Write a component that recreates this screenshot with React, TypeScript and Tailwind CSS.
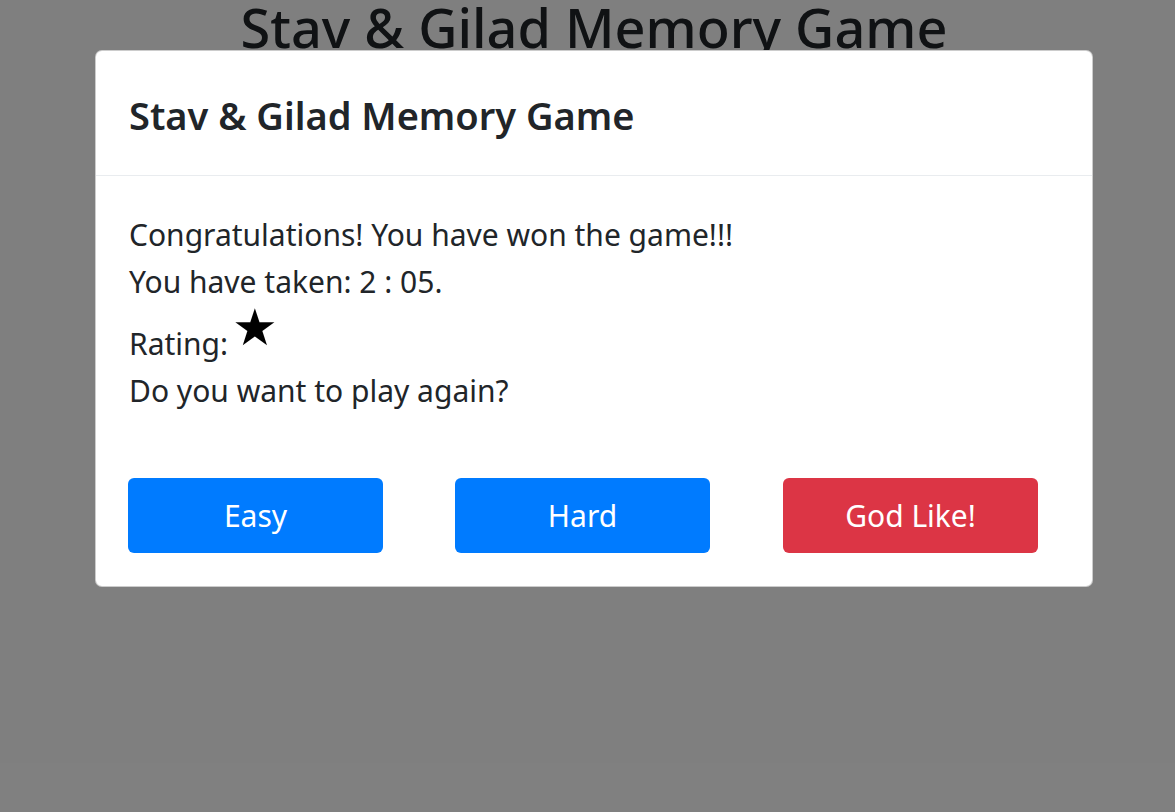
import React from "react";

export default function App() {
  return (
    <div
      className="relative h-[812px] w-full overflow-hidden bg-white text-[#212529]"
      style={{ fontFamily: '"Noto Sans", "Open Sans", sans-serif' }}
    >
      <h1 className="-mt-[5px] pl-[13px] text-center text-[54px] font-medium leading-[64px]">
        Stav &amp; Gilad Memory Game
      </h1>

      <div className="absolute inset-0 bg-black/50">
        <div className="ml-[95px] mt-[50px] w-[998px] rounded-[7px] border border-black/20 bg-white">
          <div className="flex h-[125px] items-center border-b border-[#e9ecef] px-[33px] pt-[4px]">
            <h5 className="text-[38px] font-semibold leading-none">Stav &amp; Gilad Memory Game</h5>
          </div>
          <div className="px-[33px] pt-[35px] text-[30px]">
            <div className="h-[47px] leading-[47px]">Congratulations! You have won the game!!!</div>
            <div className="h-[47px] leading-[47px]">You have taken: 2 : 05.</div>
            <div className="flex h-[62px] items-end leading-[47px]">
              <span>Rating:</span>
              <span
                className="mb-[14px] ml-[4px] text-[51px] leading-none text-black"
                style={{ fontFamily: '"DejaVu Sans", sans-serif' }}
              >
                ★
              </span>
            </div>
            <div className="h-[47px] leading-[47px]">Do you want to play again?</div>
          </div>
          <div className="flex gap-[72px] px-[32px] pb-[33px] pt-[64px]">
            <button className="h-[75px] w-[255px] rounded-[6px] bg-[#007bff] text-[30px] text-white">Easy</button>
            <button className="h-[75px] w-[255px] rounded-[6px] bg-[#007bff] text-[30px] text-white">Hard</button>
            <button className="ml-[1px] h-[75px] w-[255px] rounded-[6px] bg-[#dc3545] text-[30px] text-white">God Like!</button>
          </div>
        </div>
      </div>
    </div>
  );
}
